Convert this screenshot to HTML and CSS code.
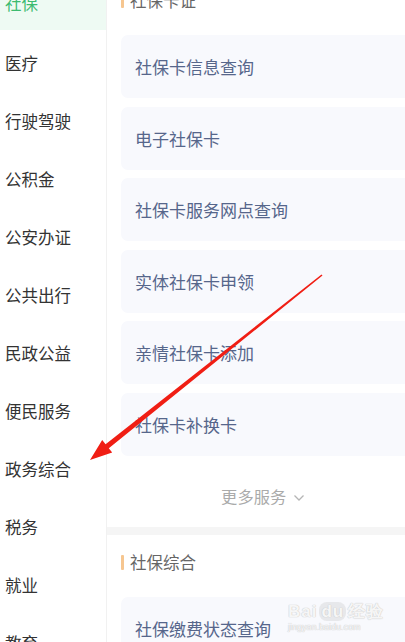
FILE: index.html
```html
<html>
 <head>
  <title>社保</title>
  <meta charset="utf-8">
  <link rel="stylesheet" href="styles.css">
 </head>
<body>
  <div class="page">
    <div class="side">
      <div class="side-list">
        <div class="side-item active">社保</div>
        <div class="side-item">医疗</div>
        <div class="side-item">行驶驾驶</div>
        <div class="side-item">公积金</div>
        <div class="side-item">公安办证</div>
        <div class="side-item">公共出行</div>
        <div class="side-item">民政公益</div>
        <div class="side-item">便民服务</div>
        <div class="side-item">政务综合</div>
        <div class="side-item">税务</div>
        <div class="side-item">就业</div>
        <div class="side-item">教育</div>
      </div>
    </div>

    <div class="main">
      <div class="section first">
        <div class="sec-title">社保卡证</div>
        <div class="cards">
          <div class="card">社保卡信息查询</div>
          <div class="card">电子社保卡</div>
          <div class="card">社保卡服务网点查询</div>
          <div class="card">实体社保卡申领</div>
          <div class="card">亲情社保卡添加</div>
          <div class="card">社保卡补换卡</div>
        </div>
        <div class="more">更多服务
          <svg width="12" height="8" viewBox="0 0 12 8"><path d="M1.5 1.5 L6 6 L10.5 1.5" fill="none" stroke="#b5b5b5" stroke-width="1.3"/></svg>
        </div>
      </div>
      <div class="band"></div>
      <div class="section">
        <div class="sec-title">社保综合</div>
        <div class="cards">
          <div class="card">社保缴费状态查询</div>
        </div>
      </div>
    </div>
  </div>

  <!-- annotation arrow -->
  <svg class="arrow" width="405" height="642" viewBox="0 0 405 642">
    <polygon points="322.5,275.6 108.8,448.3 112.2,452.6 90,460 102.2,440 105.6,444.3 321.5,274.4" fill="#f01e14"/>
  </svg>

  <div class="mark">
    <div class="mark-big">Bai<span class="du">du</span>经验</div>
    <div class="mark-small">jingyan.baidu.com</div>
  </div>
</body>
</html>
```

FILE: styles.css
```css
body{
    margin:0;
    font-family:"Noto Sans CJK SC","Noto Sans",sans-serif;
    background:#fff;
    overflow:hidden;
}

.page{
    display:flex;
    height:642px;
    overflow:hidden;
}

/* left menu */
.side{
    width:106px;
    flex:none;
    border-right:1px solid #f1f1f1;
    overflow:hidden;
}
.side-list{
    margin-top:-24px;
}
.side-item{
    height:58px;
    line-height:58px;
    padding-left:5px;
    font-size:16.5px;
    color:#333;
}
.side-item.active{
    height:54px;
    line-height:54px;
    margin-bottom:4px;
    background:#eefaf3;
    color:#3dbb70;
}

/* right panel */
.main{
    flex:1;
    overflow:hidden;
}
.section{
    padding:16px 0 0 14px;
}
.section.first{
    margin-top:-27px;
}
.sec-title{
    position:relative;
    height:22px;
    line-height:22px;
    font-size:16.5px;
    color:#666;
    padding-left:9px;
    margin-bottom:24px;
}
.sec-title:before{
    content:"";
    position:absolute;
    left:0;
    top:4px;
    width:3px;
    height:15px;
    background:#f6c690;
    border-radius:1px;
}
.cards{
    display:flex;
    flex-direction:column;
    gap:8.5px;
}
.card{
    height:63px;
    line-height:63px;
    background:#f8f9fd;
    border-radius:7px 0 0 7px;
    padding-left:14px;
    font-size:17px;
    color:#56668b;
}
.more{
    padding:30px 0 21px 0;
    line-height:20px;
    text-align:center;
    font-size:16.3px;
    color:#aaa;
}
.more svg{
    vertical-align:middle;
    margin-left:3px;
}
.band{
    height:8px;
    background:#f5f5f5;
}

/* overlays */
.arrow{
    position:absolute;
    left:0;
    top:0;
}
.mark{
    position:absolute;
    left:288px;
    top:600px;
    color:rgba(255,255,255,.85);
    text-shadow:0 0 1px #c9c9c9, 0 0 1px #c9c9c9;
    font-family:"Liberation Sans",sans-serif;
    font-weight:bold;
}
.mark-big{
    font-size:17px;
    letter-spacing:1px;
}
.mark-big .du{
    background:rgba(200,200,200,.35);
    border-radius:8px;
    padding:0 2px;
    margin:0 2px;
}
.mark-small{
    font-size:9px;
    margin-top:-1px;
    font-weight:normal;
}
```
